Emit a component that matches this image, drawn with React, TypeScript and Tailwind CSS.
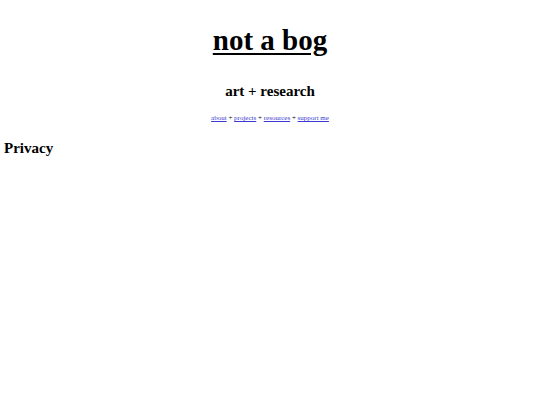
export default function App() {
  return (
    <div className="bg-white w-[540px] h-[405px] text-black" style={{ fontFamily: '"Liberation Serif", serif' }}>
      <div className="flex flex-col items-center">
        <h1 className="mt-[22px] text-[29px] leading-[36px] font-bold">
          <a href="#" className="underline text-black decoration-[2px] underline-offset-[3px]">not a bog</a>
        </h1>
        <h2 className="mt-[24px] text-[15px] leading-[18px] font-bold">art + research</h2>
        <p className="mt-[14px] text-[7px] leading-[8px]">
          <a href="#" className="underline text-[#3a3ad0]">about</a> + <a href="#" className="underline text-[#3a3ad0]">projects</a> + <a href="#" className="underline text-[#3a3ad0]">resources</a> + <a href="#" className="underline text-[#3a3ad0]">support me</a>
        </p>
      </div>
      <h3 className="mt-[17px] ml-[4px] text-[15px] leading-[18px] font-bold">Privacy</h3>
    </div>
  );
}
